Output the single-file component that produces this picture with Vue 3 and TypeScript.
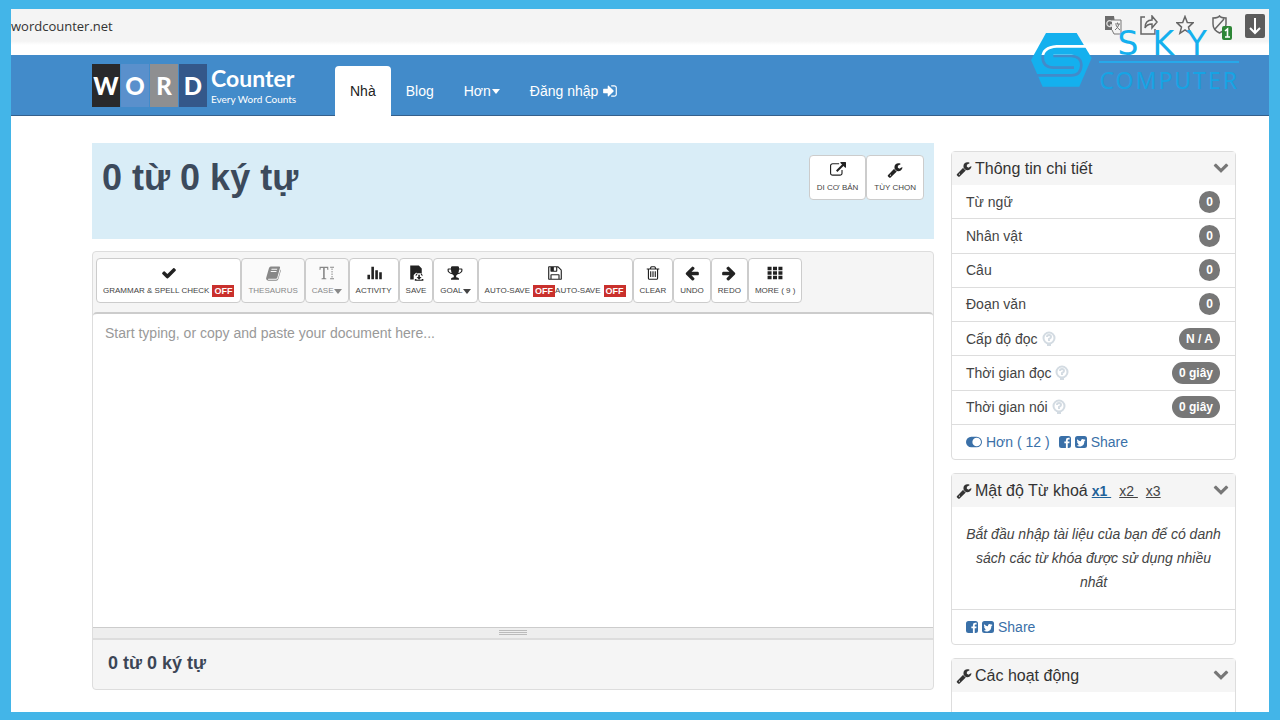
<script setup lang="ts">
interface Tool { label: string; icon: string; muted?: boolean; caret?: boolean; off?: boolean; twice?: boolean }
interface Stat { label: string; value: string; hint?: boolean }

const icons: Record<string, string> = {
  wrench: 'M448 1472q0-26-19-45t-45-19-45 19-19 45 19 45 45 19 45-19 19-45zm644-420l-682 682q-37 37-90 37-52 0-91-37l-106-108q-38-36-38-90 0-53 38-91l681-681q39 98 114.500 173.500t173.500 114.500zm634-435q0 39-23 106-47 134-164.500 217.500t-258.500 83.500q-185 0-316.500-131.500t-131.500-316.500 131.500-316.500 316.500-131.500q58 0 121.500 16.500t107.500 46.500q16 11 16 28t-16 28l-293 169v224l193 107q5-3 79-48.500t135.500-81 70.500-35.500q15 0 23.500 10t8.500 25z',
  check: 'M1671 566q0 40-28 68l-724 724-136 136q-28 28-68 28t-68-28l-136-136-362-362q-28-28-28-68t28-68l136-136q28-28 68-28t68 28l294 295 656-657q28-28 68-28t68 28l136 136q28 28 28 68z',
  external: 'M1408 928v320q0 119-84.500 203.500t-203.500 84.500h-832q-119 0-203.500-84.500t-84.500-203.500v-832q0-119 84.500-203.500t203.500-84.500h704q14 0 23 9t9 23v64q0 14-9 23t-23 9h-704q-66 0-113 47t-47 113v832q0 66 47 113t113 47h832q66 0 113-47t47-113v-320q0-14 9-23t23-9h64q14 0 23 9t9 23zm384-864v512q0 26-19 45t-45 19-45-19l-176-176-652 652q-10 10-23 10t-23-10l-114-114q-10-10-10-23t10-23l652-652-176-176q-19-19-19-45t19-45 45-19h512q26 0 45 19t19 45z',
  chevron: 'M1683 808l-742 741q-19 19-45 19t-45-19l-742-741q-19-19-19-45.500t19-45.500l166-165q19-19 45-19t45 19l531 531 531-531q19-19 45-19t45 19l166 165q19 19 19 45.500t-19 45.500z',
  undo: 'M1664 896v128q0 53-32.500 90.500t-84.500 37.500h-704l293 294q38 36 38 90t-38 90l-75 76q-37 37-90 37-52 0-91-37l-651-652q-37-37-37-90 0-52 37-91l651-650q38-38 91-38 52 0 90 38l75 74q38 38 38 91t-38 91l-293 293h704q52 0 84.500 37.500t32.500 90.500z',
  redo: 'M128 896v128q0 53 32.500 90.500t84.500 37.500h704l-293 294q-38 36-38 90t38 90l75 76q37 37 90 37 52 0 91-37l651-652q37-37 37-90 0-52-37-91l-651-650q-38-38-91-38-52 0-90 38l-75 74q-38 38-38 91t38 91l293 293h-704q-52 0-84.500 37.500t-32.500 90.500z',
  trash: 'M704 736v576q0 14-9 23t-23 9h-64q-14 0-23-9t-9-23v-576q0-14 9-23t23-9h64q14 0 23 9t9 23zm256 0v576q0 14-9 23t-23 9h-64q-14 0-23-9t-9-23v-576q0-14 9-23t23-9h64q14 0 23 9t9 23zm256 0v576q0 14-9 23t-23 9h-64q-14 0-23-9t-9-23v-576q0-14 9-23t23-9h64q14 0 23 9t9 23zm128 724v-948h-896v948q0 22 7 40.500t14.500 27 10.500 8.500h832q3 0 10.500-8.500t14.500-27 7-40.500zm-672-1076h448l-48-117q-7-9-17-11h-317q-10 2-17 11zm928 32v64q0 14-9 23t-23 9h-96v948q0 83-47 143.500t-113 60.500h-832q-66 0-113-58.500t-47-141.500v-952h-96q-14 0-23-9t-9-23v-64q0-14 9-23t23-9h309l70-167q15-37 54-63t79-26h320q40 0 79 26t54 63l70 167h309q14 0 23 9t9 23z',
  trophy: 'M522 883q-74-162-74-371h-256v96q0 78 94.500 162t235.500 113zm1078-275v-96h-256q0 209-74 371 141-29 235.500-113t94.500-162zm128-128v128q0 71-41.500 143t-112 130-173 97.500-215.500 44.500q-42 54-95 95-38 34-52.500 72.500t-14.500 89.500q0 54 30.500 91t97.500 37q75 0 133.500 45.500t58.500 114.500v64q0 14-9 23t-23 9h-832q-14 0-23-9t-9-23v-64q0-69 58.500-114.500t133.500-45.500q67 0 97.500-37t30.500-91q0-51-14.500-89.500t-52.500-72.500q-53-41-95-95-113-5-215.500-44.500t-173-97.500-112-130-41.500-143v-128q0-40 28-68t68-28h288v-96q0-66 47-113t113-47h576q66 0 113 47t47 113v96h288q40 0 68 28t28 68z',
  floppy: 'M512 1536h768v-384h-768v384zm896 0h128v-896q0-14-10-38.500t-20-34.500l-281-281q-10-10-34-20t-39-10v416q0 40-28 68t-68 28h-576q-40 0-68-28t-28-68v-416h-128v1280h128v-416q0-40 28-68t68-28h832q40 0 68 28t28 68v416zm-384-928v-320q0-13-9.500-22.500t-22.500-9.500h-192q-13 0-22.500 9.500t-9.500 22.500v320q0 13 9.500 22.500t22.500 9.500h192q13 0 22.500-9.500t9.500-22.500zm640 32v928q0 40-28 68t-68 28h-1344q-40 0-68-28t-28-68v-1344q0-40 28-68t68-28h928q40 0 88 20t76 48l280 280q28 28 48 76t20 88z',
  signin: 'M1312 896q0 26-19 45l-544 544q-19 19-45 19t-45-19-19-45v-288h-448q-26 0-45-19t-19-45v-384q0-26 19-45t45-19h448v-288q0-26 19-45t45-19 45 19l544 544q19 19 19 45zm352-352v704q0 119-84.500 203.500t-203.500 84.500h-320q-13 0-22.500-9.500t-9.500-22.500q0-4-1-20t-.5-26.500 3-23.500 10-19.500 20.500-6.500h320q66 0 113-47t47-113v-704q0-66-47-113t-113-47h-312l-11.500-1-11.500-3-8-5.500-7-9-2-13.500q0-4-1-20t-.5-26.500 3-23.500 10-19.500 20.500-6.500h320q119 0 203.500 84.500t84.500 203.500z',
  bars: 'M160 1100h290v500h-290zM600 200h290v1400h-290zM1040 600h290v1000h-290zM1480 800h290v800h-290z',
  grid: 'M64 192h448v384h-448zM672 192h448v384h-448zM1280 192h448v384h-448zM64 704h448v384h-448zM672 704h448v384h-448zM1280 704h448v384h-448zM64 1216h448v384h-448zM672 1216h448v384h-448zM1280 1216h448v384h-448z',
  book: 'M640 160h960q110 20 80 150l-300 1090q-40 140-180 140h-820q-60 0-60 50 0 50 70 50h850q170 0 230-190l270-960q60 60 30 160l-260 900q-60 210-260 210h-880q-240-20-250-240 0-80 40-190l280-960q60-190 200-210zM740 420l-35 110h640l35-110zM660 680l-35 110h640l35-110z',
  textsize: 'M60 190h980v360h-90l-50-220h-260v1130l180 50v90h-540v-90l180-50v-1130h-260l-50 220h-90zM1240 190h440v110h-440zM1240 1490h440v110h-440zM1405 380h110v180h-110zM1405 660h110v180h-110zM1405 940h110v180h-110zM1405 1220h110v180h-110z',
  save: 'M250 60h960l330 330v520h-380l-260-40-260 260v500h-390zM860 1080l180-180v200h400v-200l180 180v180l-180-160h-400l-180 160zM1150 1080h180v260h190l-280 300-280-300h190zM760 1560h180v90h600v-90h180v210h-960z',
  facebook: 'M448 128h896q320 0 320 320v896q0 320-320 320h-96v-600h200l32-232h-232v-150q0-112 114-112h126v-208q-80-12-182-12-294 0-294 304v178h-200v232h200v600h-564q-320 0-320-320v-896q0-320 320-320z',
  twitter: 'M448 128h896q320 0 320 320v896q0 320-320 320h-896q-320 0-320-320v-896q0-320 320-320zM1450 600q-70 36-130 36 66-44 96-120-70 42-150 60-90-90-190-72-214 52-190 280-260-14-480-250-106 200 76 338-60 0-106-32 10 190 188 250-50 14-106 6 60 150 224 166-140 104-350 92 340 200 660 50 350-190 330-620 74-50 128-124z',
  toggle: 'M576 260h640a636 636 0 0 1 0 1272h-640a636 636 0 0 1 0-1272zM1216 380a516 516 0 1 0 0 1032 516 516 0 0 0 0-1032z',
}

const tools: Tool[] = [
  { label: 'GRAMMAR & SPELL CHECK', icon: 'check', off: true },
  { label: 'THESAURUS', icon: 'book', muted: true },
  { label: 'CASE', icon: 'textsize', muted: true, caret: true },
  { label: 'ACTIVITY', icon: 'bars' },
  { label: 'SAVE', icon: 'save' },
  { label: 'GOAL', icon: 'trophy', caret: true },
  { label: 'AUTO-SAVE', icon: 'floppy', off: true, twice: true },
  { label: 'CLEAR', icon: 'trash' },
  { label: 'UNDO', icon: 'undo' },
  { label: 'REDO', icon: 'redo' },
  { label: 'MORE ( 9 )', icon: 'grid' },
]

const stats: Stat[] = [
  { label: 'Từ ngữ', value: '0' },
  { label: 'Nhân vật', value: '0' },
  { label: 'Câu', value: '0' },
  { label: 'Đoạn văn', value: '0' },
  { label: 'Cấp độ đọc', value: 'N / A', hint: true },
  { label: 'Thời gian đọc', value: '0 giây', hint: true },
  { label: 'Thời gian nói', value: '0 giây', hint: true },
]
</script>

<template>
  <div class="frame">
    <div class="browser">
      <span class="address">wordcounter.net</span>
      <div class="browser-icons">
        <svg width="18" height="20" viewBox="0 0 18 20"><path d="M1 1h9l2 14H1z" fill="#6b6b6b" /><path d="M8 5h9v14h-7l-2-4" fill="#f4f4f4" stroke="#777" /><path d="M8 6.500A3 3 0 1 0 8.500 10H6" fill="none" stroke="#ddd" stroke-width="1.300" /><path d="M11 9h5M13.500 7.500V9M15 9q-1 4-4 6M12 10q1 3 4 5" fill="none" stroke="#777" /></svg>
        <svg width="18" height="20" viewBox="0 0 18 20" fill="none" stroke="#666" stroke-width="1.500"><path d="M5 2H1v17h14v-5" /><path d="M5 13q0-8 7-8V1l5 6-5 6V9q-5 0-7 4z" /></svg>
        <svg width="18" height="20" viewBox="0 0 18 20" fill="none" stroke="#666" stroke-width="1.500"><path d="M9 1.500l2.300 6 5.700.3-4.500 4.300 1.600 6.200L9 14.800l-5.100 3.500 1.600-6.200L1 7.800l5.700-.3z" /></svg>
        <svg width="20" height="25" viewBox="0 0 20 25"><path d="M1 3q5 0 6.500-2Q9 3 14 3v6q0 6-6.500 9Q1 15 1 9zM12 4L3 14" fill="none" stroke="#666" stroke-width="1.500" /><rect x="10" y="11" width="10" height="14" rx="2" fill="#2d8636" /><path d="M13 16l2.500-2v8M13 22h5" fill="none" stroke="#fff" stroke-width="1.600" /></svg>
        <svg class="download" width="20" height="24" viewBox="0 0 20 24"><rect width="20" height="24" rx="2" fill="#5c5c5c" /><path d="M10 4v15M5 14l5 5 5-5" fill="none" stroke="#fff" stroke-width="2" /></svg>
      </div>
    </div>

    <header class="site-header">
      <a class="brand" href="#">
        <span class="tile tile-w">W</span><span class="tile tile-o">O</span><span class="tile tile-r">R</span><span class="tile tile-d">D</span>
        <span class="brand-text"><span class="brand-name">Counter</span><span class="brand-tag">Every Word Counts</span></span>
      </a>
      <nav class="nav">
        <a class="active" href="#">Nhà</a>
        <a href="#">Blog</a>
        <a href="#">Hơn<i class="caret"></i></a>
        <a href="#">Đăng nhập <svg class="login" viewBox="0 0 1792 1792"><path :d="icons.signin" /></svg></a>
      </nav>
    </header>

    <div class="watermark">
      <svg width="61" height="56" viewBox="35 95 183 166">
        <mask id="hex-gaps"><rect x="35" y="95" width="183" height="166" fill="#fff" /><path d="M215 137H112Q70 140 70 170 70 201 104 201H164M102 166H156Q186 168 186 194 184 224 156 224H40" fill="none" stroke="#000" stroke-width="8" /></mask>
        <path d="M80 97H172L217 172 180 258H70L35 178Z" fill="#14b0ee" mask="url(#hex-gaps)" />
      </svg>
      <div class="mark-text"><span class="mark-sky">SKY</span><span class="mark-computer">COMPUTER</span></div>
    </div>

    <main class="content">
      <section class="editor">
        <div class="counter">
          <h1>0 từ 0 ký tự</h1>
          <div class="group">
            <button type="button" class="tool"><svg viewBox="0 0 1792 1792"><path :d="icons.external" /></svg><span class="tool-label">DI CƠ BẢN</span></button>
            <button type="button" class="tool"><svg viewBox="0 0 1792 1792"><path :d="icons.wrench" /></svg><span class="tool-label">TÙY CHỌN</span></button>
          </div>
        </div>
        <div class="workspace">
          <div class="toolbar">
            <button v-for="t in tools" :key="t.label" type="button" class="tool" :class="{ muted: t.muted }">
              <svg viewBox="0 0 1792 1792"><path fill-rule="evenodd" :d="icons[t.icon]" /></svg>
              <span class="tool-label">{{ t.label }}<i v-if="t.caret" class="caret"></i><b v-if="t.off" class="off">OFF</b><template v-if="t.twice">{{ t.label }}<b class="off">OFF</b></template></span>
            </button>
          </div>
          <textarea class="document" aria-label="Document" placeholder="Start typing, or copy and paste your document here..."></textarea>
          <div class="grip"><i></i></div>
          <div class="footer-count">0 từ 0 ký tự</div>
        </div>
      </section>

      <aside class="side">
        <section class="panel">
          <h2><svg class="wrench" viewBox="0 0 1792 1792"><path :d="icons.wrench" /></svg>Thông tin chi tiết<svg class="chevron" viewBox="0 256 1792 1792"><path :d="icons.chevron" /></svg></h2>
          <ul class="stats">
            <li v-for="s in stats" :key="s.label">
              <span>{{ s.label }}</span>
              <svg v-if="s.hint" class="hint" viewBox="0 0 14 18"><circle cx="7" cy="8" r="5.500" /><path d="M5 7q0-2 2-2t2 2q0 1-2 2v2M5 15h4" /></svg>
              <b class="badge">{{ s.value }}</b>
            </li>
          </ul>
          <div class="links">
            <a href="#"><svg class="glyph" viewBox="-60 0 1912 1792"><path fill-rule="evenodd" :d="icons.toggle" /></svg>Hơn ( 12 )</a>
            <a href="#"><svg class="glyph social" viewBox="128 128 1536 1536"><path :d="icons.facebook" /></svg><svg class="glyph social" viewBox="128 128 1536 1536"><path fill-rule="evenodd" :d="icons.twitter" /></svg>Share</a>
          </div>
        </section>

        <section class="panel">
          <h2><svg class="wrench" viewBox="0 0 1792 1792"><path :d="icons.wrench" /></svg>Mật độ Từ khoá
            <span class="levels"><a class="on" href="#">x1&nbsp;</a><a href="#">x2&nbsp;</a><a href="#">x3</a></span>
            <svg class="chevron" viewBox="0 256 1792 1792"><path :d="icons.chevron" /></svg></h2>
          <p class="empty">Bắt đầu nhập tài liệu của bạn để có danh sách các từ khóa được sử dụng nhiều nhất</p>
          <div class="links">
            <a href="#"><svg class="glyph social" viewBox="128 128 1536 1536"><path :d="icons.facebook" /></svg><svg class="glyph social" viewBox="128 128 1536 1536"><path fill-rule="evenodd" :d="icons.twitter" /></svg>Share</a>
          </div>
        </section>

        <section class="panel">
          <h2><svg class="wrench" viewBox="0 0 1792 1792"><path :d="icons.wrench" /></svg>Các hoạt động<svg class="chevron" viewBox="0 256 1792 1792"><path :d="icons.chevron" /></svg></h2>
          <div class="blank"></div>
        </section>
      </aside>
    </main>
  </div>
</template>

<style>
body { margin: 0; }
</style>

<style scoped>
.frame { position: relative; box-sizing: border-box; height: 100vh; overflow: hidden; border: solid #43b5e8; border-width: 9px 11px 8px; background: #fff; color: #444; font: 14px/24px "Liberation Sans", Arial, sans-serif; }
.frame * { box-sizing: border-box; }
a { color: #3a70a8; text-decoration: none; }
button, textarea { font-family: inherit; }
svg { fill: currentColor; flex: none; }

.browser { display: flex; justify-content: space-between; height: 46px; padding-top: 4px; background: linear-gradient(#f4f4f4 32px, #fff 36px); }
.address { padding-top: 1px; color: #333; font: 13px/24px "Open Sans", sans-serif; }
.browser-icons { display: flex; gap: 18px; padding: 2px 4px 0 0; }
.browser-icons svg { fill: none; }
.browser-icons .download { margin: -1px 0 0 -5px; }

.site-header { display: flex; align-items: flex-start; height: 61px; padding-left: 81px; background: #428bca; border-bottom: 1px solid #35608c; }
.brand { display: flex; gap: 1px; width: 243px; padding-top: 9px; color: #fff; font-family: Lato, sans-serif; }
.tile { display: flex; align-items: center; justify-content: center; width: 28px; height: 43px; font-weight: 900; font-size: 24px; }
.tile-w { background: #29292b; }
.tile-o { background: #5a90cc; }
.tile-r { background: #8e8f91; }
.tile-d { background: #34588a; }
.brand-text { display: flex; flex-direction: column; padding-left: 3px; }
.brand-name { font-size: 23px; line-height: 28px; font-weight: 700; }
.brand-tag { font-size: 10px; line-height: 14px; white-space: nowrap; }
.nav { display: flex; align-items: flex-end; padding-top: 11px; }
.nav a { display: flex; align-items: center; height: 50px; padding: 0 15px; border-radius: 4px 4px 0 0; color: #fff; white-space: pre; }
.nav .active { background: #fff; color: #222; }
.caret { display: inline-block; border: solid transparent; border-width: 5px 4px 0; border-top-color: currentColor; }
.nav .caret { margin-left: 1px; }
.login { width: 16px; height: 16px; }

.watermark { position: absolute; top: 23px; right: 30px; display: flex; gap: 7px; color: #14b0ee; }
.mark-text { display: flex; flex-direction: column; align-items: center; }
.mark-sky { width: 100%; height: 31px; border-bottom: 2px solid #27a9ea; text-align: center; font: 33px/24px "DejaVu Sans", sans-serif; letter-spacing: 14px; }
.mark-computer { color: #16a4e4; font: 23px/34px "Noto Sans", sans-serif; letter-spacing: 2px; }

.content { display: grid; grid-template-columns: minmax(0, 1fr) 285px; gap: 17px; align-items: start; padding: 27px 33px 0 81px; }
.counter { display: flex; justify-content: space-between; align-items: flex-start; height: 96px; padding: 12px 10px; background: #d9edf7; }
h1 { margin: 0; color: #3c4a5c; font-size: 36px; line-height: 46px; font-weight: 700; }
.group { display: flex; }
.tool { display: flex; flex-direction: column; align-items: center; height: 45px; padding: 6px 6px 0; border: 1px solid #ccc; border-radius: 4px; background: #fff; color: #222; }
.group .tool { padding: 6px 7px 0; }
.tool svg { width: 16px; height: 16px; }
.tool-label { display: flex; align-items: center; margin-top: 4px; color: #444; font-size: 8px; line-height: 12px; white-space: pre; }
.tool.muted, .tool.muted .tool-label { color: #888; }
.tool.muted { background: #fafafa; }
.off { margin-left: 3px; padding: 0 2px; background: #c9302c; color: #fff; font-size: 9px; font-weight: 700; }
.workspace { margin-top: 12px; border: 1px solid #ddd; border-radius: 4px; background: #f5f5f5; }
.toolbar { display: flex; padding: 6px 3px 9px; }
.document { display: block; width: 100%; height: 316px; margin: 0; padding: 7px 12px; border: 1px solid #ccc; border-width: 2px 0 1px; border-radius: 4px 4px 0 0; resize: none; background: #fff; color: #444; font-size: 14px; line-height: 24px; outline: none; }
.document::placeholder { color: #999; opacity: 1; }
.grip { display: flex; justify-content: center; align-items: center; height: 12px; background: #eee; border-bottom: 2px solid #ddd; }
.grip i { width: 28px; height: 6px; background: repeating-linear-gradient(#bbb 0 1px, #eee 1px 2px); }
.footer-count { padding: 10px 15px 13px; color: #3c4656; font-size: 18px; line-height: 26px; font-weight: 700; }

.side { display: flex; flex-direction: column; gap: 13px; padding-top: 8px; }
.panel { border: 1px solid #ddd; border-radius: 4px; }
h2 { display: flex; align-items: center; height: 33px; margin: 0; padding: 0 6px 0 4px; background: #f5f5f5; color: #333; font-size: 16px; font-weight: 400; }
.wrench { width: 16px; height: 16px; margin-right: 3px; }
.chevron { width: 16px; height: 16px; margin-left: auto; color: #777; }
.stats { display: grid; grid-auto-rows: 1fr; min-height: 240px; margin: 0; padding: 0; list-style: none; }
.stats li { display: flex; align-items: center; padding: 0 15px 0 14px; border-bottom: 1px solid #ddd; }
.hint { width: 14px; height: 18px; margin-left: 4px; fill: none; stroke: #d3dbe2; stroke-width: 2; }
.badge { min-width: 21px; margin-left: auto; padding: 0 7px; border-radius: 11px; background: #777; color: #fff; font-size: 12px; line-height: 22px; text-align: center; }
.links { display: flex; gap: 9px; height: 34px; padding-left: 14px; }
.links a { display: flex; align-items: center; }
.glyph { width: 16px; height: 16px; margin-right: 4px; }
.social { width: 12px; height: 14px; }
.levels { display: flex; gap: 8px; margin-left: 4px; font-size: 14px; }
.levels a { color: #444; text-decoration: underline; }
.levels .on { color: #1f6299; font-weight: 700; }
.empty { margin: 0; padding: 15px 12px; border-bottom: 1px solid #ddd; text-align: center; font-style: italic; }
.blank { height: 100px; }
</style>
